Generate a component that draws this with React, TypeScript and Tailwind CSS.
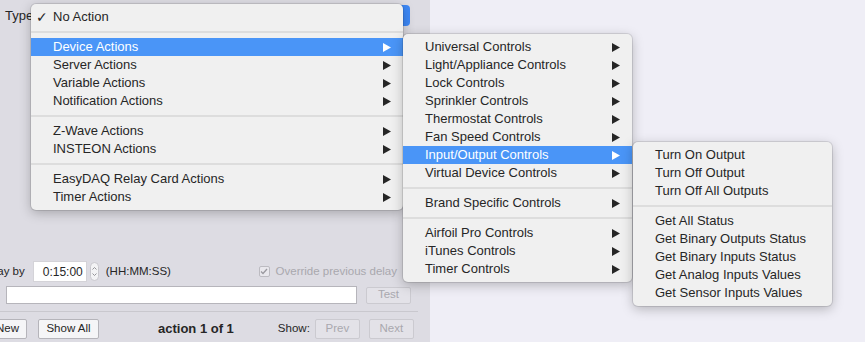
import React from "react";

type Row = { label: string; sub?: boolean; active?: boolean; checked?: boolean } | null;

const MAIN_MENU: Row[] = [
  { label: "No Action", checked: true },
  null,
  { label: "Device Actions", sub: true, active: true },
  { label: "Server Actions", sub: true },
  { label: "Variable Actions", sub: true },
  { label: "Notification Actions", sub: true },
  null,
  { label: "Z-Wave Actions", sub: true },
  { label: "INSTEON Actions", sub: true },
  null,
  { label: "EasyDAQ Relay Card Actions", sub: true },
  { label: "Timer Actions", sub: true },
];

const DEVICE_MENU: Row[] = [
  { label: "Universal Controls", sub: true },
  { label: "Light/Appliance Controls", sub: true },
  { label: "Lock Controls", sub: true },
  { label: "Sprinkler Controls", sub: true },
  { label: "Thermostat Controls", sub: true },
  { label: "Fan Speed Controls", sub: true },
  { label: "Input/Output Controls", sub: true, active: true },
  { label: "Virtual Device Controls", sub: true },
  null,
  { label: "Brand Specific Controls", sub: true },
  null,
  { label: "Airfoil Pro Controls", sub: true },
  { label: "iTunes Controls", sub: true },
  { label: "Timer Controls", sub: true },
];

const IO_MENU: Row[] = [
  { label: "Turn On Output" },
  { label: "Turn Off Output" },
  { label: "Turn Off All Outputs" },
  null,
  { label: "Get All Status" },
  { label: "Get Binary Outputs Status" },
  { label: "Get Binary Inputs Status" },
  { label: "Get Analog Inputs Values" },
  { label: "Get Sensor Inputs Values" },
];

function Arrow() {
  return (
    <svg width="8" height="9" viewBox="0 0 8 9" className="shrink-0">
      <path d="M0 0L8 4.5L0 9Z" fill="currentColor" />
    </svg>
  );
}

function Menu({ rows, className }: { rows: Row[]; className: string }) {
  return (
    <div
      className={`absolute rounded-[5px] bg-[#f0f0f0] py-[4px] shadow-[0_3px_12px_rgba(0,0,0,0.25)] ring-1 ring-black/10 ${className}`}
    >
      {rows.map((r, i) =>
        r === null ? (
          <div key={i} className="flex h-[12px] items-center">
            <div className="h-[2px] w-full bg-[#dddddd]" />
          </div>
        ) : (
          <div
            key={i}
            className={`relative flex h-[18px] items-center pl-[22px] pr-[12px] text-[13px] leading-[18px] ${
              r.active ? "bg-[#4a95f7] text-white" : "text-[#262626]"
            }`}
          >
            {r.checked && (
              <span className="absolute left-[5px] top-0 font-['DejaVu_Sans',sans-serif] text-[14px] leading-[18px]">✓</span>
            )}
            <span className="flex-1 whitespace-nowrap">{r.label}</span>
            {r.sub && <Arrow />}
          </div>
        )
      )}
    </div>
  );
}

function Btn({ label, disabled, className = "" }: { label: string; disabled?: boolean; className?: string }) {
  return (
    <div
      className={`flex items-center justify-center rounded-[2px] border text-[11.5px] ${
        disabled ? "border-[#cbcad0] bg-[#e3e2e8] text-[#a9a8ae]" : "border-[#b5b4ba] bg-[#f5f5f7] text-[#262626]"
      } ${className}`}
    >
      {label}
    </div>
  );
}

export default function App() {
  return (
    <div className="relative h-[342px] w-[865px] overflow-hidden bg-[#efeef6] font-['Liberation_Sans',Arial,sans-serif]">
      {/* window behind the menus */}
      <div className="flex h-full w-[430px] flex-col overflow-hidden bg-[#dddce3] text-[#262626]">
        <div className="mt-[5px] flex h-[21px] items-center pl-[5px]">
          <span className="text-[13px]">Type</span>
          <div className="ml-auto mr-[20px] flex h-[21px] w-[24px] items-center justify-center rounded-r-[4px] bg-[#3d88f6]">
            <svg width="7" height="11" viewBox="0 0 7 11">
              <path d="M1 4L3.5 1.5L6 4M1 7L3.5 9.5L6 7" stroke="#fff" strokeWidth="1.2" fill="none" />
            </svg>
          </div>
        </div>

        <div className="flex-1" />

        {/* delay row */}
        <div className="flex h-[19px] items-center pr-[33px]">
          <span className="-ml-[20px] whitespace-nowrap text-[11.5px]">Delay by</span>
          <div className="ml-[9px] flex h-[19px] w-[52px] items-center justify-end bg-white pr-[3px] text-[12px] shadow-[0_0_0_1px_#d4d3d8]">
            0:15:00
          </div>
          <div className="ml-[4px] flex h-[19px] w-[9px] items-center justify-center rounded-full border border-[#c9c8ce] bg-[#f3f3f5]">
            <svg width="5" height="11" viewBox="0 0 5 11">
              <path d="M0.5 3.5L2.5 1.5L4.5 3.5M0.5 7.5L2.5 9.5L4.5 7.5" stroke="#8a8a8e" strokeWidth="0.9" fill="none" />
            </svg>
          </div>
          <span className="ml-[7px] text-[11.5px]">(HH:MM:SS)</span>
          <div className="ml-auto flex items-center">
            <div className="flex h-[11px] w-[11px] items-center justify-center rounded-[2px] border border-[#bcbbc1] bg-[#e9e8ed]">
              <svg width="8" height="7" viewBox="0 0 8 7">
                <path d="M1 3.5L3 5.5L7 1" stroke="#9a999f" strokeWidth="1.3" fill="none" />
              </svg>
            </div>
            <span className="ml-[6px] whitespace-nowrap text-[11.5px] text-[#a9a8ae]">Override previous delay</span>
          </div>
        </div>

        {/* text field row */}
        <div className="mt-[5px] flex h-[18px] items-center">
          <div className="ml-[6px] h-[18px] w-[351px] border border-[#b6b5bb] bg-white" />
          <Btn label="Test" disabled className="ml-[9px] h-[17px] w-[45px]" />
        </div>

        <div className="mt-[7px] h-px w-[418px] bg-[#c9c8ce]" />

        {/* buttons row */}
        <div className="mt-[7px] flex h-[20px] items-center">
          <Btn label="New" className="-ml-[12px] h-[20px] w-[39px]" />
          <Btn label="Show All" className="ml-[11px] h-[20px] w-[61px]" />
          <span className="ml-[59px] whitespace-nowrap text-[13px] font-bold">action 1 of 1</span>
          <span className="ml-[44px] text-[11.5px]">Show:</span>
          <Btn label="Prev" disabled className="ml-[5px] h-[20px] w-[45px]" />
          <Btn label="Next" disabled className="ml-[9px] h-[20px] w-[45px]" />
        </div>
        <div className="h-[3px]" />
      </div>

      {/* popup menus */}
      <Menu rows={MAIN_MENU} className="left-[31px] top-[4px] w-[372px]" />
      <Menu rows={DEVICE_MENU} className="left-[403px] top-[34px] w-[229px]" />
      <Menu rows={IO_MENU} className="left-[633px] top-[142px] w-[199px]" />
    </div>
  );
}
